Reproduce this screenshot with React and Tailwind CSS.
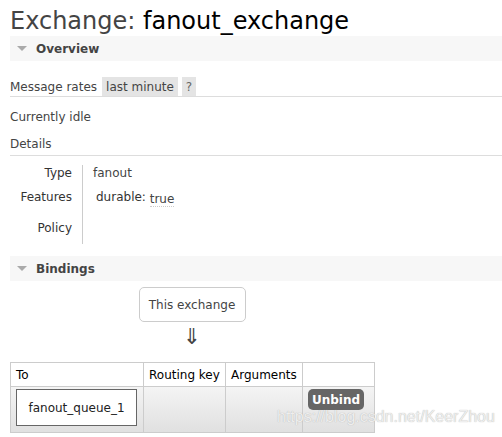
import React from 'react';

const font = { fontFamily: '"DejaVu Sans", Verdana, sans-serif' };

function SectionBar({ title }) {
  return (
    <div className="flex h-[25px] items-center bg-[#f7f7f7] pl-[7px]">
      <span className="mr-[9px] h-0 w-0 border-x-[5px] border-t-[5px] border-x-transparent border-t-[#aaa]" />
      <span className="text-[12px] font-bold text-[#444]">{title}</span>
    </div>
  );
}

function DetailRow({ label, children, h }) {
  return (
    <div className="flex" style={{ height: h }}>
      <div className="w-[72px] pr-[10px] text-right">{label}</div>
      <div className="flex-1 border-l border-[#ccc] pl-[10px]">{children}</div>
    </div>
  );
}

export default function App() {
  return (
    <div className="relative h-[437px] w-[502px] overflow-hidden bg-white pl-[10px] text-[12px] text-[#444]" style={font}>
      <h1 className="mt-[6px] h-[30px] text-[24px] leading-[30px] text-[#444]">
        Exchange: <span className="text-black">fanout_exchange</span>
      </h1>

      <SectionBar title="Overview" />

      <div className="mt-[16px] flex h-[20px] items-stretch border-b border-[#ddd]">
        <span className="flex items-center pr-[5px]">Message rates</span>
        <span className="flex items-center bg-[#e4e4e4] px-[4px] text-[#444]">last minute</span>
        <span className="ml-[4px] flex items-center bg-[#e4e4e4] px-[4px] text-[#666]">?</span>
      </div>

      <div className="mt-[12px] leading-[16px]">Currently idle</div>

      <div className="mt-[11px] border-b border-[#ddd] pb-[3px] leading-[16px]">Details</div>

      <div className="mt-[9px] leading-[16px] text-[#333]">
        <DetailRow label="Type" h={24}>
          <span className="text-[#444]">fanout</span>
        </DetailRow>
        <DetailRow label="Features" h={31}>
          <span className="ml-[3px]">durable:</span>{' '}
          <span className="relative top-[2px] border-b border-dotted border-[#ccc] text-[#444]">true</span>
        </DetailRow>
        <DetailRow label="Policy" h={24}>
          <span>&nbsp;</span>
        </DetailRow>
      </div>

      <div className="mt-[12px]">
        <SectionBar title="Bindings" />
      </div>

      <div className="flex flex-col items-center" style={{ width: 364 }}>
        <div className="mt-[6px] flex h-[35px] w-[107px] items-center justify-center rounded-[5px] border border-[#ccc] text-[#444]">
          This exchange
        </div>
        <div className="mt-[3px] text-[22px] leading-[24px] text-[#444]">⇓</div>
      </div>

      <table className="mt-[13px] border-collapse text-left text-[12px] text-black">
        <thead>
          <tr className="h-[24px]">
            <th className="w-[133px] border border-[#ccc] px-[5px] font-normal">To</th>
            <th className="w-[82px] border border-[#ccc] px-[5px] font-normal">Routing key</th>
            <th className="w-[77px] border border-[#ccc] px-[5px] font-normal">Arguments</th>
            <th className="w-[72px] border border-[#ccc] px-[5px] font-normal"></th>
          </tr>
        </thead>
        <tbody>
          <tr className="h-[46px] bg-gradient-to-b from-[#f4f4f4] to-[#e0e0e0]">
            <td className="border border-[#ccc] px-[5px] align-top pt-[2px]">
              <div className="flex h-[37px] w-[121px] items-center justify-center border border-[#666] bg-white text-[#222]">
                fanout_queue_1
              </div>
            </td>
            <td className="border border-[#ccc]"></td>
            <td className="border border-[#ccc]"></td>
            <td className="border border-[#ccc] px-[5px] pt-[2px] align-top">
              <span className="inline-flex h-[21px] w-[56px] items-center justify-center rounded-[5px] bg-[#666] font-bold text-white">
                Unbind
              </span>
            </td>
          </tr>
        </tbody>
      </table>

      <div
        className="absolute left-[277px] top-[407px] text-[16px] leading-[20px] text-[#eee] [text-shadow:0_0_1px_#aaa]"
        style={{ fontFamily: '"Liberation Sans", Arial, sans-serif' }}
      >
        https://blog.csdn.net/KeerZhou
      </div>
    </div>
  );
}
